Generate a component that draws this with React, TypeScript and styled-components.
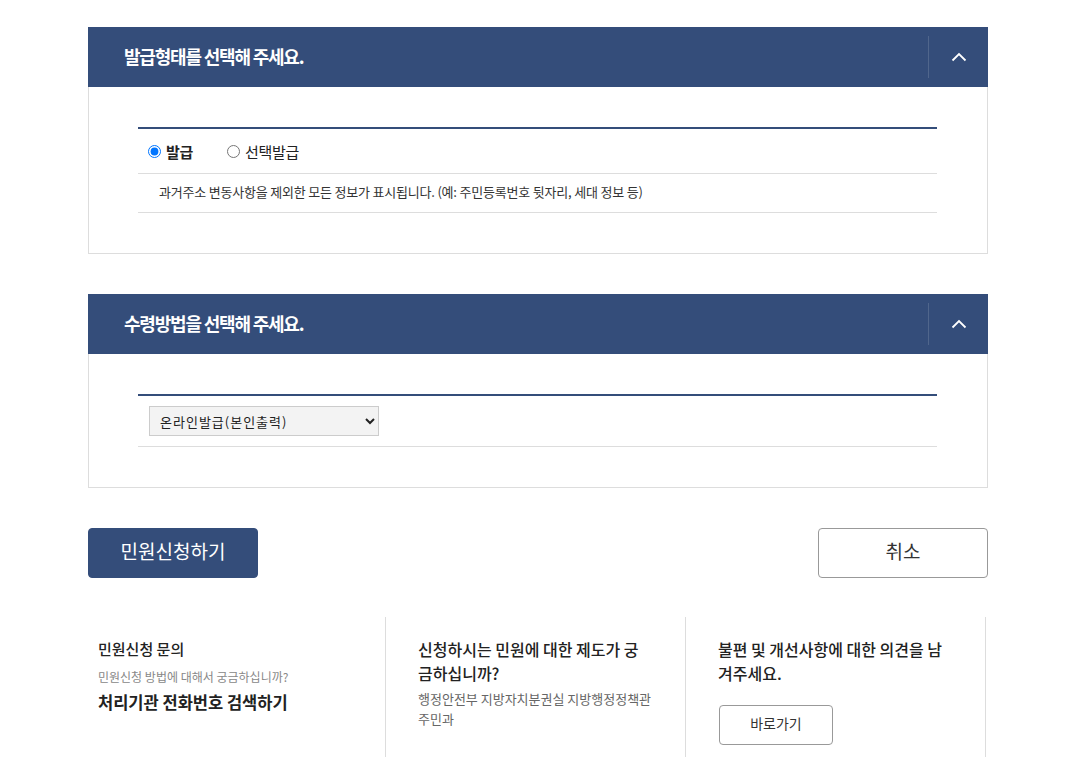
import React, { useState } from "react";
import styled, { createGlobalStyle } from "styled-components";

const Global = createGlobalStyle`
  html, body { margin: 0; padding: 0; background: #fff; }
  body { font-family: "Noto Sans CJK KR", "Noto Sans", sans-serif; color: #222; }
  * { box-sizing: border-box; }
`;

const Page = styled.div`
  width: 900px;
  margin: 0 auto;
  padding-top: 27px;
  display: flex;
  flex-direction: column;
`;

const Panel = styled.section`
  display: flex;
  flex-direction: column;
  margin-bottom: 40px;
`;

const PanelHeader = styled.div`
  height: 60px;
  background: #344d7a;
  display: flex;
  align-items: center;
`;

const PanelTitle = styled.h2`
  flex: 1;
  margin: 0 0 3px;
  padding-left: 36px;
  font-size: 18px;
  font-weight: 700;
  letter-spacing: -1.2px;
  color: #fff;
`;

const ToggleButton = styled.button`
  width: 60px;
  height: 42px;
  border: 0;
  border-left: 1px solid rgba(255, 255, 255, 0.14);
  background: transparent;
  display: flex;
  align-items: center;
  justify-content: center;
  padding: 0;
  cursor: pointer;
`;

const PanelBody = styled.div`
  border: 1px solid #ddd;
  border-top: 0;
  padding: 40px 50px 40px 49px;
`;

const Table = styled.div`
  border-top: 2px solid #344d7a;
  display: flex;
  flex-direction: column;
`;

const Row = styled.div<{ $h: number; $pl: number; $pb?: number }>`
  height: ${(p) => p.$h}px;
  border-bottom: 1px solid #ddd;
  display: flex;
  align-items: center;
  padding-left: ${(p) => p.$pl}px;
  padding-bottom: ${(p) => p.$pb ?? 0}px;
  gap: 34px;
`;

const RadioLabel = styled.label<{ $on?: boolean }>`
  display: flex;
  align-items: center;
  gap: 5px;
  font-size: 15px;
  font-weight: ${(p) => (p.$on ? 700 : 400)};
  color: #222;
  letter-spacing: -0.3px;
  input { margin: 0; width: 13px; height: 13px; }
`;

const Desc = styled.p`
  margin: 0;
  font-size: 13px;
  color: #333;
  letter-spacing: -0.2px;
`;

const Select = styled.select`
  width: 230px;
  height: 30px;
  background: #f3f3f3;
  border: 1px solid #ccc;
  border-radius: 0;
  font-family: "Noto Sans CJK KR", sans-serif;
  font-size: 13px;
  letter-spacing: 1px;
  color: #222;
  padding: 0 6px;
`;

const Actions = styled.div`
  display: flex;
  justify-content: space-between;
  margin-bottom: 39px;
`;

const Btn = styled.button<{ $primary?: boolean }>`
  width: 170px;
  height: 50px;
  border-radius: 4px;
  padding: 0 0 5px;
  font-family: "Noto Sans CJK KR", sans-serif;
  font-size: 19px;
  background: ${(p) => (p.$primary ? "#344d7a" : "#fff")};
  color: ${(p) => (p.$primary ? "#fff" : "#333")};
  border: 1px solid ${(p) => (p.$primary ? "#344d7a" : "#999")};
  cursor: pointer;
`;

const Footer = styled.div`
  display: grid;
  grid-template-columns: 298px 300px 300px;
`;

const InfoCol = styled.div<{ $first?: boolean }>`
  height: 140px;
  border-right: 1px solid #ddd;
  padding: ${(p) => (p.$first ? "20px 10px 0 10px" : "20px 32px 0 32px")};
  display: flex;
  flex-direction: column;
  align-items: flex-start;
`;

const InfoTitle = styled.h3<{ $size: number }>`
  margin: 0;
  font-size: ${(p) => p.$size}px;
  line-height: 24px;
  font-weight: 500;
  color: #222;
`;

const InfoSub = styled.p<{ $size: number; $color: string; $mt: number }>`
  margin: ${(p) => p.$mt}px 0 0;
  font-size: ${(p) => p.$size}px;
  line-height: 20px;
  color: ${(p) => p.$color};
`;

const InfoLink = styled.a`
  margin-top: 5px;
  font-size: 16.5px;
  font-weight: 700;
  line-height: 20px;
  color: #222;
  text-decoration: none;
`;

const SmallBtn = styled.button`
  margin-top: 20px;
  width: 114px;
  height: 40px;
  padding: 0 0 4px;
  border: 1px solid #999;
  border-radius: 4px;
  background: #fff;
  font-family: "Noto Sans CJK KR", sans-serif;
  font-size: 14px;
  color: #333;
  margin-left: 1px;
`;

const Chevron = () => (
  <svg width="16" height="10" viewBox="0 0 16 10" fill="none">
    <path d="M1.5 8.5L8 2l6.5 6.5" stroke="#fff" strokeWidth="1.8" />
  </svg>
);

export default function App() {
  const [kind, setKind] = useState("issue");
  return (
    <>
      <Global />
      <Page>
        <Panel>
          <PanelHeader>
            <PanelTitle>발급형태를 선택해 주세요.</PanelTitle>
            <ToggleButton aria-label="접기"><Chevron /></ToggleButton>
          </PanelHeader>
          <PanelBody>
            <Table>
              <Row $h={45} $pl={10}>
                <RadioLabel $on={kind === "issue"}>
                  <input type="radio" name="k" checked={kind === "issue"} onChange={() => setKind("issue")} />
                  발급
                </RadioLabel>
                <RadioLabel $on={kind === "select"}>
                  <input type="radio" name="k" checked={kind === "select"} onChange={() => setKind("select")} />
                  선택발급
                </RadioLabel>
              </Row>
              <Row $h={39} $pl={21} $pb={3}>
                <Desc>과거주소 변동사항을 제외한 모든 정보가 표시됩니다. (예: 주민등록번호 뒷자리, 세대 정보 등)</Desc>
              </Row>
            </Table>
          </PanelBody>
        </Panel>

        <Panel>
          <PanelHeader>
            <PanelTitle>수령방법을 선택해 주세요.</PanelTitle>
            <ToggleButton aria-label="접기"><Chevron /></ToggleButton>
          </PanelHeader>
          <PanelBody>
            <Table>
              <Row $h={51} $pl={11}>
                <Select defaultValue="online">
                  <option value="online">온라인발급(본인출력)</option>
                </Select>
              </Row>
            </Table>
          </PanelBody>
        </Panel>

        <Actions>
          <Btn $primary>민원신청하기</Btn>
          <Btn>취소</Btn>
        </Actions>

        <Footer>
          <InfoCol $first>
            <InfoTitle $size={15}>민원신청 문의</InfoTitle>
            <InfoSub $size={12} $color="#888" $mt={6}>민원신청 방법에 대해서 궁금하십니까?</InfoSub>
            <InfoLink href="#">처리기관 전화번호 검색하기</InfoLink>
          </InfoCol>
          <InfoCol>
            <InfoTitle $size={16}>신청하시는 민원에 대한 제도가 궁금하십니까?</InfoTitle>
            <InfoSub $size={13} $color="#666" $mt={4}>행정안전부 지방자치분권실 지방행정정책관 주민과</InfoSub>
          </InfoCol>
          <InfoCol>
            <InfoTitle $size={16}>불편 및 개선사항에 대한 의견을 남겨주세요.</InfoTitle>
            <SmallBtn>바로가기</SmallBtn>
          </InfoCol>
        </Footer>
      </Page>
    </>
  );
}
